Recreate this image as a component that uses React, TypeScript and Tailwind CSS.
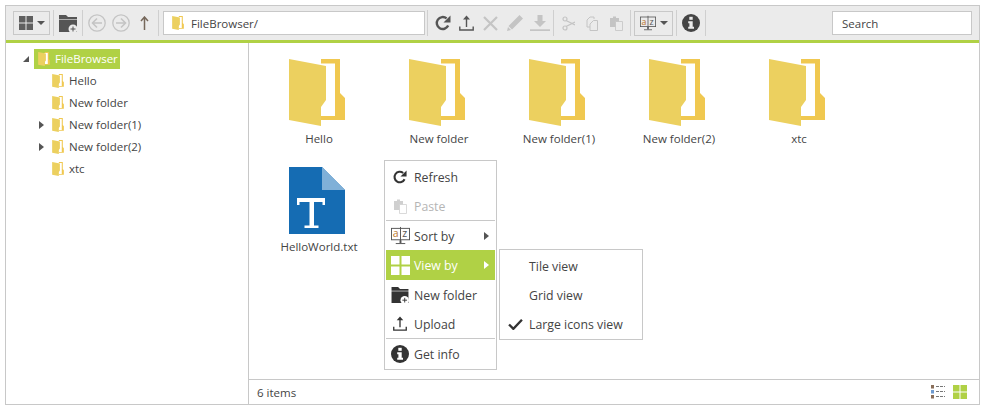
import React from "react";

const FONT = "font-['Open_Sans','Noto_Sans',sans-serif]";

function Folder({ className = "" }: { className?: string }) {
  return (
    <svg viewBox="0 0 56 67" className={className}>
      <path d="M0 0H51V34L56 39V61H32V0Z" fill="#f0c850" />
      <path d="M24 4.5H46V57H32V10Z" fill="#fff" />
      <path d="M0 0L37 7V41L32 48V67L0 61Z" fill="#ecd05f" />
    </svg>
  );
}

function GridIcon({ color = "#5f5f5f", size = 20, gap = 2 }: { color?: string; size?: number; gap?: number }) {
  const c = (size - gap) / 2;
  return (
    <svg width={size} height={size} viewBox={`0 0 ${size} ${size}`}>
      <rect width={c} height={c} fill={color} />
      <rect x={c + gap} width={c} height={c} fill={color} />
      <rect y={c + gap} width={c} height={c} fill={color} />
      <rect x={c + gap} y={c + gap} width={c} height={c} fill={color} />
    </svg>
  );
}

function NewFolderIcon({ color = "#555", plusBg = "#ebebeb", w = 18, h = 17 }: { color?: string; plusBg?: string; w?: number; h?: number }) {
  return (
    <svg width={w} height={h} viewBox="0 0 18 17">
      <path d="M0 0H7L9 2H18V4H0Z" fill={color} />
      <path d="M0 4.6H18V17H0Z" fill={color} />
      <circle cx="14" cy="14" r="4.5" fill={plusBg} />
      <path d="M14 11.5V16.5M11.5 14H16.5" stroke={color} strokeWidth="1" />
    </svg>
  );
}

function RefreshIcon({ color = "#555", size = 16 }: { color?: string; size?: number }) {
  return (
    <svg width={size} height={size} viewBox="0 0 16 16">
      <path d="M13.2 10.6A6 6 0 1 1 11.6 3.4" fill="none" stroke={color} strokeWidth="2.4" />
      <path d="M15.5 0.5V7.5H8.5Z" fill={color} />
    </svg>
  );
}

function UploadIcon({ color = "#555", w = 15, h = 16 }: { color?: string; w?: number; h?: number }) {
  return (
    <svg width={w} height={h} viewBox="0 0 15 16">
      <path d="M7.5 0.5L11 4.6H8.2V12H6.8V4.6H4Z" fill={color} />
      <path d="M0.8 11.5V15H14.2V11.5" fill="none" stroke={color} strokeWidth="1.4" />
    </svg>
  );
}

function PasteIcon({ color = "#c4c4c4", back = "#ebebeb" }: { color?: string; back?: string }) {
  return (
    <svg width="13" height="15" viewBox="0 0 13 15">
      <path d="M0 2H3V0.5H6V2H9V11H0Z" fill={color} />
      <path d="M5.5 5.5H12.5V14.5H5.5Z" fill={back} stroke={color} strokeWidth="0.8" />
    </svg>
  );
}

function SortIcon({ size = 20 }: { size?: number }) {
  return (
    <svg width={size} height={size} viewBox="0 0 20 20">
      <rect x="0.5" y="2.5" width="19" height="12" fill="none" stroke="#555" strokeWidth="1" />
      <rect x="9.5" y="1" width="1" height="15" fill="#555" />
      <rect x="9" y="15" width="2" height="3" fill="#555" />
      <rect x="5" y="18" width="10" height="1" fill="#555" />
      <text x="5" y="12" textAnchor="middle" fontSize="11" fontFamily="Open Sans" fill="#b9752c">a</text>
      <text x="14.5" y="12" textAnchor="middle" fontSize="11" fontFamily="Open Sans" fill="#555">z</text>
    </svg>
  );
}

function InfoIcon({ color = "#444", size = 18, fg = "#ebebeb" }: { color?: string; size?: number; fg?: string }) {
  return (
    <svg width={size} height={size} viewBox="0 0 18 18">
      <circle cx="9" cy="9" r="9" fill={color} />
      <rect x="7.3" y="2.8" width="3.4" height="3" fill={fg} />
      <path d="M6.2 7.2H10.7V12.8H12V14.8H6.2V12.8H7.4V9.2H6.2Z" fill={fg} />
    </svg>
  );
}

function Sep() {
  return <div className="w-px h-[26px] bg-[#cfcfcf] shrink-0" />;
}

function Caret({ color = "#555" }: { color?: string }) {
  return (
    <svg width="8" height="4" viewBox="0 0 8 4">
      <path d="M0 0H8L4 4Z" fill={color} />
    </svg>
  );
}

function CircleArrow({ dir }: { dir: "l" | "r" }) {
  return (
    <svg width="18" height="18" viewBox="0 0 18 18">
      <circle cx="9" cy="9" r="8.2" fill="none" stroke="#c4c4c4" strokeWidth="1.3" />
      <path
        d={dir === "l" ? "M9 4.5L4.5 9L9 13.5M5 9H14" : "M9 4.5L13.5 9L9 13.5M13 9H4"}
        fill="none"
        stroke="#c4c4c4"
        strokeWidth="1.6"
      />
    </svg>
  );
}

function Toolbar() {
  return (
    <div className="h-[34px] bg-[#ebebeb] flex items-center shrink-0 pl-[7px] pr-[7px]">
      <div className="w-[37px] h-[24px] border border-[#c8c8c8] flex items-center justify-center gap-[4px]">
        <GridIcon size={14} gap={1} />
        <Caret />
      </div>
      <div className="ml-[3px]"><Sep /></div>
      <div className="ml-[5px]"><NewFolderIcon /></div>
      <div className="ml-[5px]"><Sep /></div>
      <div className="ml-[5px]"><CircleArrow dir="l" /></div>
      <div className="ml-[6px]"><CircleArrow dir="r" /></div>
      <svg className="ml-[10px]" width="9" height="14" viewBox="0 0 9 14">
        <path d="M4.5 14V1M1 5L4.5 1L8 5" fill="none" stroke="#75675a" strokeWidth="1.5" />
      </svg>
      <div className="ml-[9px]"><Sep /></div>
      <div className="ml-[4px] w-[262px] h-[24px] bg-white border border-[#c8c8c8] flex items-center pl-[8px] text-[11.5px] text-[#444]">
        <Folder className="w-[12px] h-[14px] mr-[7px]" />
        <span className="pt-[2px]">FileBrowser/</span>
      </div>
      <div className="ml-[2px]"><Sep /></div>
      <div className="ml-[7px]"><RefreshIcon /></div>
      <div className="ml-[8px]"><UploadIcon /></div>
      <svg className="ml-[9px]" width="15" height="15" viewBox="0 0 15 15">
        <path d="M1 1L14 14M14 1L1 14" stroke="#c4c4c4" strokeWidth="2.2" />
      </svg>
      <svg className="ml-[8px]" width="18" height="18" viewBox="0 0 18 18">
        <path d="M13.5 1L17 4.5L6 15.5L2.5 12ZM2 13L5 16L1 17Z" fill="#c4c4c4" />
      </svg>
      <svg className="ml-[6px]" width="20" height="16" viewBox="0 0 20 16">
        <path d="M7.5 0H12.5V6H16L10 12L4 6H7.5Z" fill="#c4c4c4" />
        <rect y="14.3" width="20" height="1.7" fill="#c4c4c4" />
      </svg>
      <div className="ml-[3px]"><Sep /></div>
      <svg className="ml-[7px]" width="14" height="15" viewBox="0 0 14 15">
        <circle cx="4" cy="3" r="2" fill="none" stroke="#c4c4c4" strokeWidth="1.2" />
        <circle cx="4" cy="12" r="2" fill="none" stroke="#c4c4c4" strokeWidth="1.2" />
        <path d="M5 4.5L14 9M5 10.5L14 6" stroke="#c4c4c4" strokeWidth="1.3" />
      </svg>
      <svg className="ml-[11px]" width="12" height="15" viewBox="0 0 12 15">
        <path d="M4 1H8V3M4 1L1 4V11H4" fill="none" stroke="#c4c4c4" strokeWidth="1" />
        <path d="M7.5 4.5H11.5V14.5H4V8Z" fill="none" stroke="#c4c4c4" strokeWidth="1" />
      </svg>
      <div className="ml-[12px]"><PasteIcon /></div>
      <div className="ml-[7px]"><Sep /></div>
      <div className="ml-[3px] w-[39px] h-[25px] border border-[#c8c8c8] flex items-center justify-center gap-[4px]">
        <SortIcon size={16} />
        <Caret />
      </div>
      <div className="ml-[3px]"><Sep /></div>
      <div className="ml-[5px]"><InfoIcon /></div>
      <div className="ml-[5px]"><Sep /></div>
      <div className="ml-auto w-[140px] h-[24px] bg-white border border-[#c8c8c8] flex items-center pl-[9px] text-[11.5px] text-[#444]">
        <span className="pt-[1px]">Search</span>
      </div>
    </div>
  );
}

function Arrow({ open = false }: { open?: boolean }) {
  return open ? (
    <svg width="6" height="6" viewBox="0 0 6 6"><path d="M6 0V6H0Z" fill="#555" /></svg>
  ) : (
    <svg width="5" height="8" viewBox="0 0 5 8"><path d="M0 0L5 4L0 8Z" fill="#555" /></svg>
  );
}

function TreeRow({ label, arrow = false }: { label: string; arrow?: boolean }) {
  return (
    <div className="h-[22px] flex items-center text-[11.5px] text-[#444] pl-[33px]">
      <div className="w-[13px] flex items-center">{arrow && <Arrow />}</div>
      <Folder className="w-[12px] h-[14px] mr-[5px]" />
      <span>{label}</span>
    </div>
  );
}

function Tree() {
  return (
    <div className="w-[242px] shrink-0 border-r border-[#c8c8c8] box-content pt-[6px]">
      <div className="flex items-center h-[20px] pl-[17px] mb-[1px]">
        <div className="w-[11px]"><Arrow open /></div>
        <div className="h-[20px] w-[86px] bg-[#b0d145] flex items-center pl-[4px] text-[11.5px] text-white">
          <Folder className="w-[12px] h-[14px] mr-[5px]" />
          <span>FileBrowser</span>
        </div>
      </div>
      <TreeRow label="Hello" />
      <TreeRow label="New folder" />
      <TreeRow label="New folder(1)" arrow />
      <TreeRow label="New folder(2)" arrow />
      <TreeRow label="xtc" />
    </div>
  );
}

function Cell({ label, children }: { label: string; children: React.ReactNode }) {
  return (
    <div className="w-[120px] h-[108px] flex flex-col items-center text-[11.5px] text-[#444]">
      <div className="w-[56px] h-[67px] mr-[4px]">{children}</div>
      <div className="mt-[5px] leading-[16px]">{label}</div>
    </div>
  );
}

function TextFile() {
  return (
    <svg viewBox="0 0 56 67" className="w-[56px] h-[67px]">
      <path d="M0 0H33L56 23V67H0Z" fill="#156cb3" />
      <path d="M33 0L56 23H33Z" fill="#7fb0d8" />
      <path d="M8 31H36V38H33.5V35H25V58.5H29.5V61H15.5V58.5H20.5V35H10.5V38H8Z" fill="#fff" />
    </svg>
  );
}

function MenuItem({
  label,
  icon,
  h,
  pad = "pt-[2px]",
  arrow = false,
  active = false,
  disabled = false,
}: {
  label: string;
  icon?: React.ReactNode;
  h: string;
  pad?: string;
  arrow?: boolean;
  active?: boolean;
  disabled?: boolean;
}) {
  return (
    <div
      className={`${h} flex items-center ${active ? "bg-[#b0d145] text-white" : disabled ? "text-[#b5b5b5]" : "text-[#444]"}`}
    >
      <div className="w-[28px] flex items-center justify-center shrink-0">{icon}</div>
      <span className={`flex-1 text-[12.3px] ${pad}`}>{label}</span>
      {arrow && (
        <svg className="mr-[6px]" width="5" height="8" viewBox="0 0 5 8">
          <path d="M0 0L5 4L0 8Z" fill={active ? "#fff" : "#555"} />
        </svg>
      )}
    </div>
  );
}

function ContextMenu() {
  return (
    <div className="absolute left-[378px] top-[154px] w-[113px] h-[210px] bg-white border border-[#c8c8c8] p-px">
      <MenuItem h="h-[30px]" label="Refresh" icon={<RefreshIcon color="#333" size={14} />} />
      <MenuItem h="h-[28px]" label="Paste" disabled icon={<PasteIcon color="#d0d0d0" back="#fff" />} />
      <div className="h-px bg-[#c8c8c8]" />
      <MenuItem h="h-[29px]" pad="pt-[4px]" label="Sort by" arrow icon={<SortIcon size={19} />} />
      <MenuItem h="h-[30px]" label="View by" arrow active icon={<GridIcon color="#fff" size={19} gap={2} />} />
      <MenuItem h="h-[29px]" pad="pt-[4px]" label="New folder" icon={<NewFolderIcon color="#333" plusBg="#fff" w={18} h={16} />} />
      <MenuItem h="h-[29px]" pad="pt-[4px]" label="Upload" icon={<UploadIcon color="#333" w={14} h={15} />} />
      <div className="h-px bg-[#c8c8c8]" />
      <MenuItem h="h-[30px]" label="Get info" icon={<InfoIcon color="#333" fg="#fff" />} />
    </div>
  );
}

function SubMenu() {
  const items = ["Tile view", "Grid view", "Large icons view"];
  return (
    <div className="absolute left-[493px] top-[243px] w-[144px] h-[91px] bg-white border border-[#c8c8c8] py-px">
      {items.map((t, i) => (
        <div key={t} className="h-[29px] flex items-center text-[12.3px] text-[#444]">
          <div className="w-[29px] pl-[8px] flex shrink-0">
            {i === 2 && (
              <svg width="15" height="12" viewBox="0 0 14 11">
                <path d="M1 6L5 10L13 1.5" fill="none" stroke="#333" strokeWidth="2.2" />
              </svg>
            )}
          </div>
          <span className="pt-[4px]">{t}</span>
        </div>
      ))}
    </div>
  );
}

function StatusBar() {
  return (
    <div className="h-[25px] border-t border-[#c8c8c8] flex items-center pl-[8px] pr-[12px] text-[11.5px] text-[#444] shrink-0">
      <span className="flex-1 pt-[2px]">6 items</span>
      <svg className="mr-[8px]" width="14" height="14" viewBox="0 0 14 14">
        <rect width="3" height="3.5" fill="#8a6f5a" />
        <rect y="5" width="3" height="3.5" fill="#6f9bd0" />
        <rect y="10" width="3" height="3.5" fill="#8a6f5a" />
        <path d="M5 1.5H14M5 6.5H14M5 11.5H14" stroke="#777" strokeWidth="1" strokeDasharray="3 1" />
      </svg>
      <GridIcon color="#b0d145" size={14} gap={1} />
    </div>
  );
}

export default function App() {
  return (
    <div className={`w-[985px] h-[411px] bg-white p-[5px] ${FONT}`}>
      <div className="relative w-[975px] h-[400px] border border-[#c8c8c8] flex flex-col">
        <Toolbar />
        <div className="h-[3px] bg-[#b0d145] shrink-0" />
        <div className="flex-1 flex min-h-0">
          <Tree />
          <div className="flex-1 flex flex-col min-w-0">
            <div className="flex-1 flex flex-wrap content-start pl-[10px] pr-[12px] pt-[16px]">
              {["Hello", "New folder", "New folder(1)", "New folder(2)", "xtc"].map((n) => (
                <Cell key={n} label={n}><Folder className="w-[56px] h-[67px]" /></Cell>
              ))}
              <Cell label="HelloWorld.txt"><TextFile /></Cell>
            </div>
            <StatusBar />
          </div>
        </div>
        <ContextMenu />
        <SubMenu />
      </div>
    </div>
  );
}
